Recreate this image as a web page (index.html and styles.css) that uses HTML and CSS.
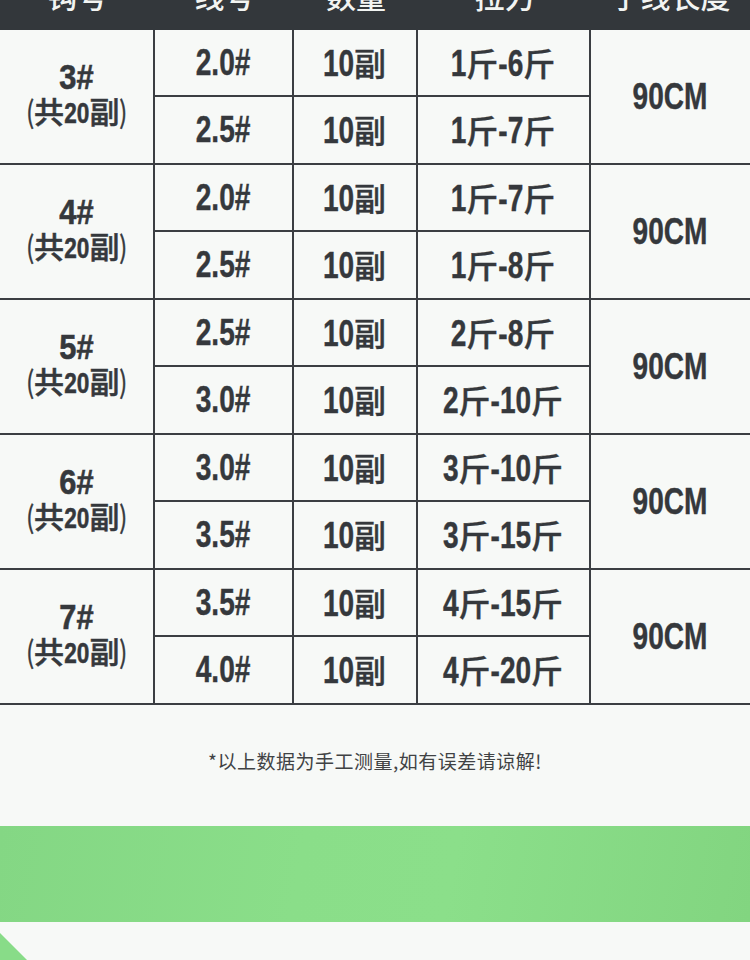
FILE: index.html
```html
<!DOCTYPE html>
<html lang="zh-CN">
<head>
<meta charset="utf-8">
<title>规格表</title>
<link rel="stylesheet" href="styles.css">
</head>
<body>
<div class="page">
  <div class="thead">
    <div class="th">钩号</div>
    <div class="th">线号</div>
    <div class="th">数量</div>
    <div class="th">拉力</div>
    <div class="th">子线长度</div>
  </div>

  <div class="group">
    <div class="hook"><div class="hook-no"><span class="sx">3#</span></div><div class="hook-sub"><span class="sx"><span class="p">(</span><span class="cn">共</span>20<span class="cn">副</span><span class="p">)</span></span></div></div>
    <div class="cell top"><span class="sx">2.0#</span></div>
    <div class="cell top"><span class="sx">10<span class="cn">副</span></span></div>
    <div class="cell top"><span class="sx">1<span class="cn">斤</span>-6<span class="cn">斤</span></span></div>
    <div class="len"><span class="sx">90CM</span></div>
    <div class="cell"><span class="sx">2.5#</span></div>
    <div class="cell"><span class="sx">10<span class="cn">副</span></span></div>
    <div class="cell"><span class="sx">1<span class="cn">斤</span>-7<span class="cn">斤</span></span></div>
  </div>

  <div class="group">
    <div class="hook"><div class="hook-no"><span class="sx">4#</span></div><div class="hook-sub"><span class="sx"><span class="p">(</span><span class="cn">共</span>20<span class="cn">副</span><span class="p">)</span></span></div></div>
    <div class="cell top"><span class="sx">2.0#</span></div>
    <div class="cell top"><span class="sx">10<span class="cn">副</span></span></div>
    <div class="cell top"><span class="sx">1<span class="cn">斤</span>-7<span class="cn">斤</span></span></div>
    <div class="len"><span class="sx">90CM</span></div>
    <div class="cell"><span class="sx">2.5#</span></div>
    <div class="cell"><span class="sx">10<span class="cn">副</span></span></div>
    <div class="cell"><span class="sx">1<span class="cn">斤</span>-8<span class="cn">斤</span></span></div>
  </div>

  <div class="group">
    <div class="hook"><div class="hook-no"><span class="sx">5#</span></div><div class="hook-sub"><span class="sx"><span class="p">(</span><span class="cn">共</span>20<span class="cn">副</span><span class="p">)</span></span></div></div>
    <div class="cell top"><span class="sx">2.5#</span></div>
    <div class="cell top"><span class="sx">10<span class="cn">副</span></span></div>
    <div class="cell top"><span class="sx">2<span class="cn">斤</span>-8<span class="cn">斤</span></span></div>
    <div class="len"><span class="sx">90CM</span></div>
    <div class="cell"><span class="sx">3.0#</span></div>
    <div class="cell"><span class="sx">10<span class="cn">副</span></span></div>
    <div class="cell"><span class="sx">2<span class="cn">斤</span>-10<span class="cn">斤</span></span></div>
  </div>

  <div class="group">
    <div class="hook"><div class="hook-no"><span class="sx">6#</span></div><div class="hook-sub"><span class="sx"><span class="p">(</span><span class="cn">共</span>20<span class="cn">副</span><span class="p">)</span></span></div></div>
    <div class="cell top"><span class="sx">3.0#</span></div>
    <div class="cell top"><span class="sx">10<span class="cn">副</span></span></div>
    <div class="cell top"><span class="sx">3<span class="cn">斤</span>-10<span class="cn">斤</span></span></div>
    <div class="len"><span class="sx">90CM</span></div>
    <div class="cell"><span class="sx">3.5#</span></div>
    <div class="cell"><span class="sx">10<span class="cn">副</span></span></div>
    <div class="cell"><span class="sx">3<span class="cn">斤</span>-15<span class="cn">斤</span></span></div>
  </div>

  <div class="group">
    <div class="hook"><div class="hook-no"><span class="sx">7#</span></div><div class="hook-sub"><span class="sx"><span class="p">(</span><span class="cn">共</span>20<span class="cn">副</span><span class="p">)</span></span></div></div>
    <div class="cell top"><span class="sx">3.5#</span></div>
    <div class="cell top"><span class="sx">10<span class="cn">副</span></span></div>
    <div class="cell top"><span class="sx">4<span class="cn">斤</span>-15<span class="cn">斤</span></span></div>
    <div class="len"><span class="sx">90CM</span></div>
    <div class="cell"><span class="sx">4.0#</span></div>
    <div class="cell"><span class="sx">10<span class="cn">副</span></span></div>
    <div class="cell"><span class="sx">4<span class="cn">斤</span>-20<span class="cn">斤</span></span></div>
  </div>

  <div class="note">*以上数据为手工测量,如有误差请谅解!</div>

  <div class="band"></div>

  <div class="foot">
    <svg class="tri" width="27" height="27" viewBox="0 0 27 27"><polygon points="0,0 27,27 0,27" fill="#88dc88"/></svg>
  </div>
</div>
</body>
</html>
```
FILE: styles.css
```css
html, body {
  margin: 0;
  padding: 0;
  background: #f7f9f7;
}
body {
  overflow: hidden;
}
.page {
  width: 750px;
  color: #35383c;
  font-family: "Liberation Sans", Arial, sans-serif;
  font-weight: 700;
}
.thead {
  display: grid;
  grid-template-columns: 155px 139px 124px 173px 159px;
  height: 60px;
  margin-top: -30px;
  background: #33373b;
}
.th {
  display: flex;
  align-items: center;
  justify-content: center;
  padding-bottom: 11px;
  box-sizing: border-box;
  font-family: "Noto Sans CJK SC", sans-serif;
  font-weight: 500;
  font-size: 30px;
  line-height: 30px;
  color: #f2f4f2;
}
.group {
  display: grid;
  grid-template-columns: 155px 139px 124px 173px 159px;
  grid-template-rows: 67px 66px;
  border-bottom: 2px solid #3b3e42;
}
.hook {
  grid-row: 1 / 3;
  grid-column: 1;
  border-right: 2px solid #3b3e42;
  display: flex;
  flex-direction: column;
  align-items: center;
  justify-content: center;
  padding-bottom: 8px;
}
.hook-no {
  display: flex;
  justify-content: center;
  align-items: center;
  height: 38px;
  font-size: 35px;
  line-height: 38px;
}
.hook-no .sx {
  transform: scaleX(0.88);
  -webkit-text-stroke: 0.6px #35383c;
}
.hook-sub {
  display: flex;
  justify-content: center;
  align-items: center;
  height: 32px;
  font-size: 29px;
  line-height: 32px;
}
.hook-sub .sx {
  -webkit-text-stroke: 0.5px #35383c;
}
.hook-sub .cn {
  font-size: 30px;
}
.cell {
  border-right: 2px solid #3b3e42;
  display: flex;
  align-items: center;
  justify-content: center;
  font-size: 36px;
  line-height: 36px;
  box-sizing: border-box;
}
.cell.top {
  border-bottom: 2px solid #3b3e42;
}
.len {
  grid-row: 1 / 3;
  grid-column: 5;
  display: flex;
  align-items: center;
  justify-content: center;
  font-size: 36px;
  line-height: 36px;
}
/* condensed digits: the run is narrowed, CJK glyphs are widened back */
.sx {
  display: inline-block;
  white-space: nowrap;
  font-weight: 700;
  transform: scaleX(0.78);
  -webkit-text-stroke: 0.4px #35383c;
}
.sx .cn {
  display: inline-block;
  width: 1.282em;
  text-align: center;
  transform: scaleX(1.282);
}
.cn {
  font-family: "Noto Sans CJK SC", sans-serif;
  font-weight: 500;
  font-size: 32px;
}
.p {
  font-family: "Noto Sans CJK SC", sans-serif;
  font-weight: 400;
  font-size: 30px;
}
.note {
  padding: 44px 0 53px;
  text-align: center;
  font-family: "Noto Sans CJK SC", sans-serif;
  font-weight: 400;
  font-size: 19px;
  line-height: 24px;
  letter-spacing: 0.5px;
  color: #404244;
}
.band {
  height: 96px;
  background: linear-gradient(100deg, #84d784 0%, #8ade89 40%, #8bdf8a 60%, #82d580 100%);
}
.foot {
  padding-top: 11px;
  height: 60px;
}
.tri {
  display: block;
}
```
